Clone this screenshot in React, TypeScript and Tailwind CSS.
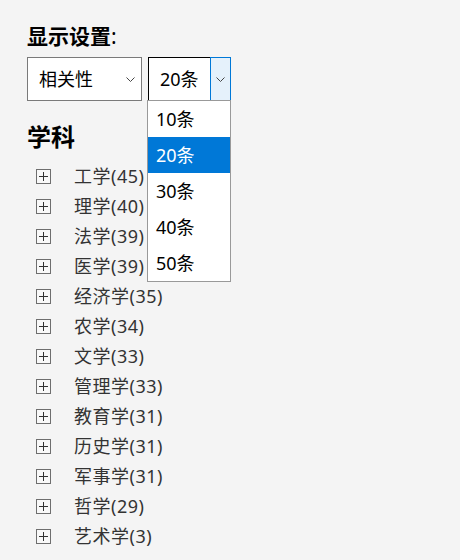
import React from "react";

const subjects = [
  { name: "工学", count: 45 },
  { name: "理学", count: 40 },
  { name: "法学", count: 39 },
  { name: "医学", count: 39 },
  { name: "经济学", count: 35 },
  { name: "农学", count: 34 },
  { name: "文学", count: 33 },
  { name: "管理学", count: 33 },
  { name: "教育学", count: 31 },
  { name: "历史学", count: 31 },
  { name: "军事学", count: 31 },
  { name: "哲学", count: 29 },
  { name: "艺术学", count: 3 },
];

const options = ["10条", "20条", "30条", "40条", "50条"];

function Chevron() {
  return (
    <svg width="9" height="5" viewBox="0 0 9 5" fill="none">
      <polyline points="0.5,0.5 4.5,4.5 8.5,0.5" stroke="#444" strokeWidth="1" />
    </svg>
  );
}

function PlusBox() {
  return (
    <span className="flex h-[15px] w-[15px] items-center justify-center border border-[#6e6e6e] bg-[#f8f8f8]">
      <svg width="11" height="11" viewBox="0 0 11 11">
        <line x1="1" y1="5.5" x2="10" y2="5.5" stroke="#333" strokeWidth="1" />
        <line x1="5.5" y1="1" x2="5.5" y2="10" stroke="#333" strokeWidth="1" />
      </svg>
    </span>
  );
}

export default function App() {
  return (
    <div
      className="min-h-[560px] w-[460px] bg-[#f4f4f4] pl-[27px] pt-[21px]"
      style={{ fontFamily: '"Noto Sans", "Noto Sans CJK SC", sans-serif' }}
    >
      <div className="text-[21px] leading-[30px] text-black">
        <span className="font-bold">显示设置</span>:
      </div>

      <div className="mt-[6px] flex gap-[6px]">
        <div className="flex h-[44px] w-[115px] items-center justify-between border border-[#7a7a7a] bg-white pl-[11px] pr-[6px] text-[18px] text-black">
          <span>相关性</span>
          <Chevron />
        </div>

        <div className="relative flex h-[44px] w-[83px] border border-black bg-white text-[18px] text-black">
          <div className="flex flex-1 items-center pl-[11px]">20条</div>
          <div className="-my-px -mr-px flex w-[21px] items-center justify-center border border-[#0078d7] bg-[#e5f1fb]">
            <Chevron />
          </div>

          <ul className="absolute left-[-2px] top-[42px] z-10 w-[84px] border border-[#999] bg-white">
            {options.map((o) => (
              <li
                key={o}
                className={
                  o === "20条"
                    ? "flex h-[36px] items-center bg-[#0078d7] pl-[8px] text-white"
                    : "flex h-[36px] items-center pl-[8px] text-black"
                }
              >
                {o}
              </li>
            ))}
          </ul>
        </div>
      </div>

      <h2 className="mt-[20px] text-[24px] font-bold leading-[32px] text-black">学科</h2>

      <ul className="mt-[8px]">
        {subjects.map((s) => (
          <li key={s.name} className="flex h-[30px] items-center pl-[9px] text-[18px] tracking-[0.5px] text-[#333]">
            <PlusBox />
            <span className="ml-[23px]">
              {s.name}({s.count})
            </span>
          </li>
        ))}
      </ul>
    </div>
  );
}
